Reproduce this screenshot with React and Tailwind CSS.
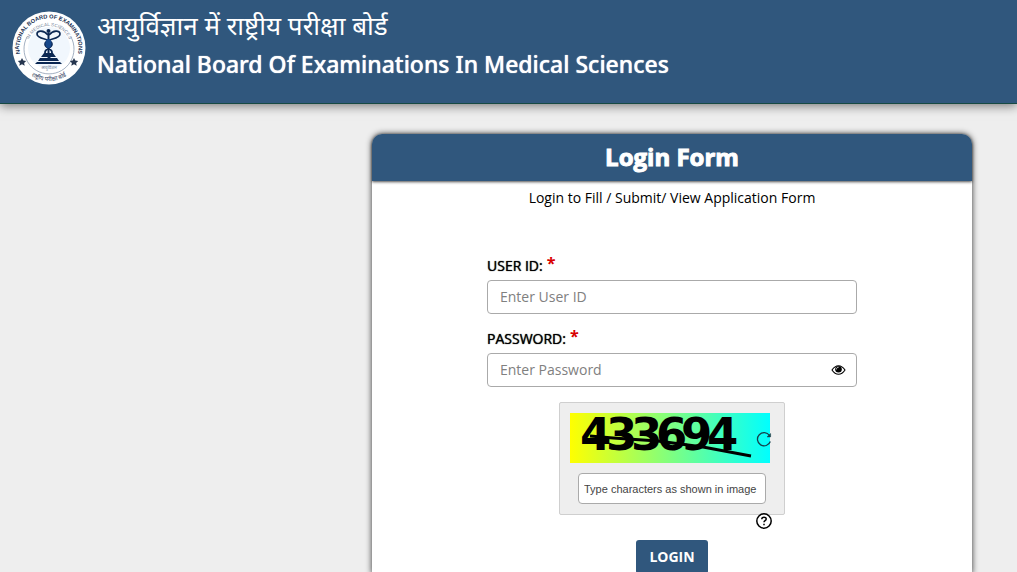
const fields = [
  { id: "userId", label: "USER ID:", placeholder: "Enter User ID", type: "text" },
  { id: "password", label: "PASSWORD:", placeholder: "Enter Password", type: "password" },
];

function Emblem() {
  return (
    <svg className="h-[74px] w-[74px] flex-shrink-0 overflow-visible" viewBox="0 0 74 74" fill="none" aria-hidden="true">
      <defs>
        <path id="ring-outer" d="M13 54A29.5 29.5 0 1 1 61 54" />
        <path id="ring-inner" d="M15 37A22 22 0 0 1 59 37" />
        <path id="ring-bottom" d="M4 37A33 33 0 0 0 70 37" />
      </defs>
      <circle cx="37" cy="37" r="36.5" fill="white" />
      <circle cx="37" cy="37" r="21" fill="#f1f7fd" />
      <path d="M15 26A25 25 0 1 0 59 26" stroke="#7d8fa8" strokeWidth="0.7" />
      <text fill="#182e50" fontSize="5.6" fontWeight="700" fontFamily="Liberation Sans, sans-serif">
        <textPath href="#ring-outer" startOffset="50%" textAnchor="middle">
          NATIONAL BOARD OF EXAMINATIONS
        </textPath>
      </text>
      <text fill="#74839a" fontSize="4.6" fontFamily="Liberation Sans, sans-serif">
        <textPath href="#ring-inner" startOffset="50%" textAnchor="middle">
          IN MEDICAL SCIENCES
        </textPath>
      </text>
      <text fill="#33455f" fontSize="6" fontFamily="Noto Sans, sans-serif">
        <textPath href="#ring-bottom" startOffset="50%" textAnchor="middle">
          राष्ट्रीय परीक्षा बोर्ड
        </textPath>
      </text>
      <text x="37" y="58" textAnchor="middle" fill="#74839a" fontSize="4" fontFamily="Noto Sans, sans-serif">
        आयुर्विज्ञान
      </text>
      <g fill="#26364f">
        <path d="M10 47l1.3 2.6 2.9.3-2.1 2 .6 2.8-2.7-1.4-2.7 1.4.6-2.8-2.1-2 2.9-.3z" />
        <path d="M62 47l1.3 2.6 2.9.3-2.1 2 .6 2.8-2.7-1.4-2.7 1.4.6-2.8-2.1-2 2.9-.3z" />
      </g>
      <path
        d="M36 24c-4-5-11-5-11-1 0 6 15 4 15 10 0 5-8 4-7 9 1 2 4 3 5 5M37 24c4-5 11-5 11-1 0 6-15 4-15 10 0 5 8 4 7 9-1 2-3 3-4 5"
        stroke="#0b2752"
        strokeWidth="1.7"
      />
      <g fill="#0b2752">
        <circle cx="36.5" cy="20" r="2" />
        <path d="M35.5 22h2v20h-2z" />
        <ellipse cx="36.5" cy="32.5" rx="3" ry="4.5" fill="#17488b" />
        <path d="M32 42h9l3 4H29zM28 47h17l2 3H26zM25 51h23l2 2H23z" />
      </g>
    </svg>
  );
}

function EyeIcon() {
  return (
    <svg width="15" height="12" viewBox="0 0 15 12" fill="none">
      <path
        d="M1 6C3 3 5 1.7 7.5 1.7S12 3 14 6C12 9 10 10.3 7.5 10.3S3 9 1 6z"
        stroke="black"
        strokeWidth="1.1"
      />
      <circle cx="7.5" cy="5.2" r="3.3" fill="black" />
      <path d="M5.5 5C5.5 3.8 6.3 3.2 7.3 3.2" stroke="white" strokeWidth="0.8" strokeLinecap="round" />
    </svg>
  );
}

function Header() {
  return (
    <header className="flex h-[104px] items-start gap-[11px] border-b border-[#174a43] bg-[#30577d] px-3 pt-[11px] text-white shadow-[0_2px_10px_rgba(0,0,0,0.5)]">
      <Emblem />
      <div className="font-['Noto_Sans',sans-serif]">
        <p lang="hi" className="text-[26px] leading-7">
          आयुर्विज्ञान में राष्ट्रीय परीक्षा बोर्ड
        </p>
        <h1 className="mt-[10px] text-[23px] font-medium leading-[30px] [text-shadow:0_0_1px_white]">
          National Board Of Examinations In Medical Sciences
        </h1>
      </div>
    </header>
  );
}

function Field({ id, label, placeholder, type }) {
  return (
    <div className="mb-[15px]">
      <label htmlFor={id} className="flex h-6 items-start gap-1 text-sm font-medium leading-5">
        <span className="[text-shadow:0_0_1px_black]">{label}</span>
        <span className="text-base leading-[14px] font-bold text-[#d90000]">*</span>
      </label>
      <div className="relative">
        <input
          id={id}
          type={type}
          placeholder={placeholder}
          className="h-[34px] w-full rounded border border-[#aaaaaa] bg-white px-3 pb-[2px] text-sm placeholder:text-[#808080]"
        />
        {type === "password" && (
          <button type="button" aria-label="Show password" className="absolute right-[11px] top-[11px]">
            <EyeIcon />
          </button>
        )}
      </div>
    </div>
  );
}

function Captcha() {
  return (
    <div className="relative mx-auto mb-[25px] w-[226px] rounded-xs border border-[#cfcfcf] bg-[#eeeeee] p-[10px]">
      <div className="relative h-[50px] w-[200px] bg-linear-to-r/srgb from-[#ffff00] to-[#00ffff]">
        <svg className="h-full w-full overflow-visible" viewBox="0 0 200 50" role="img" aria-label="Captcha">
          <text
            x="10 36 61 86 111 137"
            y="37"
            fontSize="45"
            fontWeight="700"
            fontFamily="DejaVu Sans, sans-serif"
          >
            433694
          </text>
          <path d="M20 23L43 25L88 28L133 34L181 43" fill="none" stroke="black" strokeWidth="3" />
        </svg>
        <button type="button" aria-label="Refresh captcha" className="absolute -right-[2px] top-[18px]">
          <svg width="16" height="16" viewBox="0 0 16 16" fill="none" stroke="#15414b" strokeWidth="1.3">
            <path d="M14.3 10.5A6.6 6.6 0 1 1 13.5 4.5" />
            <path d="M14.6 2.5v3.4h-3.6z" fill="#15414b" strokeWidth="0.5" />
          </svg>
        </button>
      </div>
      <input
        type="text"
        aria-label="Type characters as shown in image"
        placeholder="Type characters as shown in image"
        className="mt-[10px] ml-2 block h-[31px] w-[188px] rounded border border-[#aaaaaa] bg-white px-[5px] font-['Liberation_Sans',Arial,sans-serif] text-[11px] placeholder:text-[#444444]"
      />
      <button type="button" aria-label="Help" className="absolute -bottom-[15px] right-3">
        <svg width="16" height="16" viewBox="0 0 16 16" fill="none" stroke="black" strokeWidth="1.5">
          <circle cx="8" cy="8" r="7.2" />
          <path d="M5.8 6.2C5.8 3.6 10.2 3.6 10.2 6.1C10.2 7.7 8 7.7 8 9.3M8 10.7v1.5" />
        </svg>
      </button>
    </div>
  );
}

export default function App() {
  return (
    <div className="flex min-h-screen flex-col bg-[#eeeeee] font-['Open_Sans',sans-serif] text-black">
      <Header />
      <main className="flex flex-1 justify-end pt-[30px] pr-[45px]">
        <section className="w-full max-w-[600px] rounded-t-[10px] bg-white shadow-[0_0_6px_rgba(0,0,0,0.8)]">
          <h2 className="rounded-t-[10px] bg-[#30577d] pb-[2px] text-center text-2xl font-bold leading-[45px] text-white shadow-[0_1px_3px_rgba(0,0,0,0.7)] [-webkit-text-stroke:1px_white]">
            Login Form
          </h2>
          <p className="mt-[7px] text-center text-sm leading-5">Login to Fill / Submit/ View Application Form</p>
          <form className="mx-auto mt-12 w-[370px]" onSubmit={(e) => e.preventDefault()}>
            {fields.map((f) => (
              <Field key={f.id} {...f} />
            ))}
            <Captcha />
            <button
              type="submit"
              className="mx-auto block h-[34px] w-[72px] rounded-[3px] bg-[#30577d] text-sm font-bold text-white"
            >
              LOGIN
            </button>
          </form>
        </section>
      </main>
    </div>
  );
}
